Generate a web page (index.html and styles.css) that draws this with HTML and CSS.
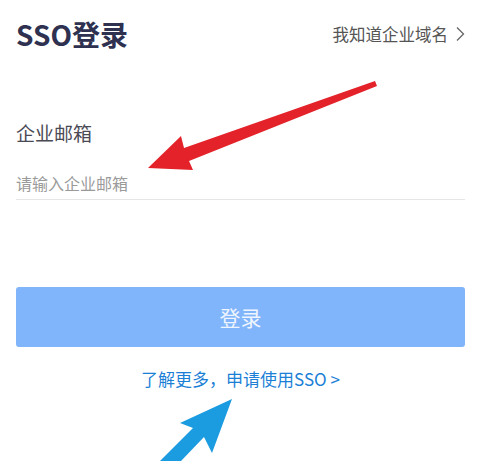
FILE: index.html
```html
<!DOCTYPE html>
<html lang="zh">
<head>
<meta charset="utf-8">
<title>SSO登录</title>
<link rel="stylesheet" href="styles.css">
</head>
<body>
<div class="page">
  <header class="top">
    <h1 class="title">SSO登录</h1>
    <a class="domain-link">我知道企业域名
      <svg class="chev" width="10" height="16" viewBox="0 0 10 16"><path d="M2 1.5 L8.5 8 L2 14.5" fill="none" stroke="#666" stroke-width="1.3"/></svg>
    </a>
  </header>
  <section class="field">
    <label class="label">企业邮箱</label>
    <div class="input">请输入企业邮箱</div>
  </section>
  <button class="btn">登录</button>
  <a class="more">了解更多，申请使用SSO &gt;</a>
</div>
<svg class="annot" width="500" height="461" viewBox="0 0 500 461">
  <polygon fill="#e3222a" points="148,168 181,136 184,148 375,81 377,86 189,161 193,170"/>
  <polygon fill="#1b9be0" points="232,399 180,423 193,428 160,461 181,461 204,437 212,453"/>
</svg>
</body>
</html>
```
FILE: styles.css
```css
* { box-sizing: border-box; }
html, body { margin: 0; padding: 0; background: #fff; }
body {
  width: 500px;
  height: 461px;
  overflow: hidden;
  position: relative;
  font-family: "Noto Sans CJK SC", "Noto Sans", sans-serif;
}
.page {
  padding: 0 35px 0 16px;
  display: flex;
  flex-direction: column;
}
.top {
  display: flex;
  justify-content: space-between;
  align-items: center;
  height: 68px;
}
.title {
  margin: 0;
  font-size: 28px;
  font-weight: 700;
  color: #2e3150;
}
.domain-link {
  display: flex;
  align-items: center;
  gap: 7px;
  font-size: 16.5px;
  color: #555;
}
.field {
  margin-top: 51px;
  display: flex;
  flex-direction: column;
}
.label {
  font-size: 19px;
  color: #4a4a55;
  line-height: 28px;
}
.input {
  margin-top: 25px;
  font-size: 16px;
  color: #9a9a9a;
  line-height: 22px;
  padding-bottom: 5px;
  border-bottom: 1px solid #e6e6e6;
}
.btn {
  margin-top: 87px;
  height: 60px;
  border: none;
  border-radius: 3px;
  background: #80b4fb;
  color: #eef5ff;
  font-family: inherit;
  font-size: 21px;
}
.more {
  margin-top: 20px;
  text-align: center;
  font-size: 17px;
  color: #1c7fd6;
  line-height: 24px;
}
.annot {
  position: absolute;
  left: 0;
  top: 0;
  pointer-events: none;
}
```
